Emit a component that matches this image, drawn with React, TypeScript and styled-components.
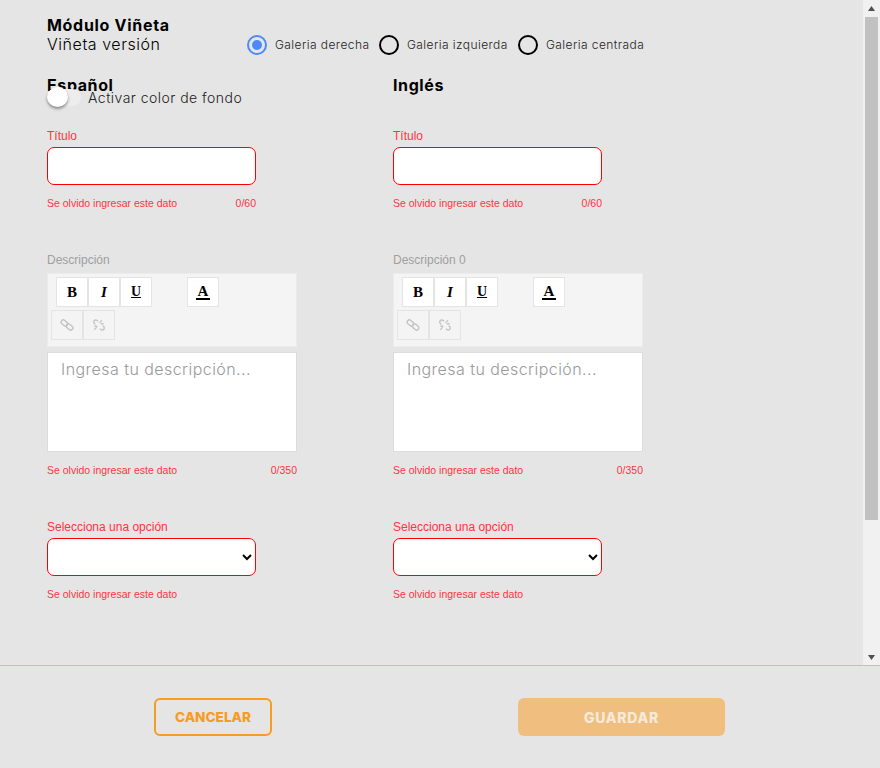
import React from "react";
import styled, { createGlobalStyle } from "styled-components";

const GlobalStyle = createGlobalStyle`
  html, body {
    margin: 0;
    padding: 0;
    height: 100%;
    overflow: hidden;
    background: #e5e5e5;
  }
`;

const Page = styled.div`
  height: 768px;
  display: flex;
  flex-direction: column;
  background: #e5e5e5;
  font-family: "Inter", "Liberation Sans", sans-serif;
  color: #000;
`;

const Main = styled.div`
  height: 665px;
  flex: 0 0 auto;
  display: flex;
  overflow: hidden;
`;

const Content = styled.div`
  flex: 1 1 auto;
  box-sizing: border-box;
  padding: 16px 0 0 47px;
`;

const ScrollBar = styled.div`
  width: 17px;
  flex: 0 0 auto;
  display: flex;
  flex-direction: column;
  align-items: center;
  background: #f1f1f1;
`;

const ScrollArrow = styled.svg`
  width: 17px;
  height: 17px;
  flex: 0 0 auto;
  fill: #505050;
`;

const ScrollThumb = styled.div`
  width: 13px;
  height: 503px;
  flex: 0 0 auto;
  background: #c1c1c1;
`;

const ScrollRest = styled.div`
  flex: 1 1 auto;
`;

const Divider = styled.div`
  height: 1px;
  flex: 0 0 auto;
  background: #f3b95f;
`;

const Header = styled.div`
  display: flex;
  align-items: flex-start;
  height: 55px;
`;

const TitleBlock = styled.div`
  width: 200px;
`;

const ModuleTitle = styled.div`
  font-size: 16px;
  line-height: 19px;
  font-weight: 700;
  letter-spacing: 0.7px;
`;

const ModuleSubtitle = styled.div`
  font-size: 16px;
  line-height: 18px;
  font-weight: 300;
  letter-spacing: 0.55px;
`;

const RadioGroup = styled.div`
  display: flex;
  align-items: center;
  margin-top: 19px;
`;

const RadioItem = styled.div<{ $width: number }>`
  display: flex;
  align-items: center;
  gap: 8px;
  width: ${(p) => p.$width}px;
  font-size: 12px;
  line-height: 20px;
  font-weight: 300;
  letter-spacing: 0.42px;
  color: #222;
`;

const RadioCircle = styled.span<{ $checked?: boolean }>`
  width: 20px;
  height: 20px;
  box-sizing: border-box;
  flex: 0 0 auto;
  border-radius: 50%;
  border: 2px solid ${(p) => (p.$checked ? "#4c8bf5" : "#000")};
  display: flex;
  align-items: center;
  justify-content: center;

  &::after {
    content: "";
    display: ${(p) => (p.$checked ? "block" : "none")};
    width: 10px;
    height: 10px;
    border-radius: 50%;
    background: #4c8bf5;
  }
`;

const Columns = styled.div`
  display: grid;
  grid-template-columns: 346px 346px;
  margin-top: 4px;
`;

const Column = styled.div`
  display: flex;
  flex-direction: column;
`;

const LangTitle = styled.div`
  font-size: 16px;
  line-height: 20px;
  font-weight: 700;
  height: 20px;
  letter-spacing: 0.6px;
`;

const ToggleRow = styled.div`
  display: flex;
  align-items: center;
  gap: 7px;
  height: 22px;
  margin-top: -9px;
  font-size: 14px;
  font-weight: 300;
  letter-spacing: 0.47px;
  color: #222;
`;

const ToggleTrack = styled.span`
  position: relative;
  width: 34px;
  height: 22px;
  flex: 0 0 auto;

  &::before {
    content: "";
    position: absolute;
    left: 0;
    right: 0;
    top: 3px;
    bottom: 2px;
    border-radius: 9px;
    background: #ededed;
  }

  &::after {
    content: "";
    position: absolute;
    left: 0;
    top: 1px;
    width: 21px;
    height: 20px;
    border-radius: 50%;
    background: #fff;
    box-shadow: 0 2px 3px rgba(0, 0, 0, 0.4);
  }
`;

const Spacer = styled.div<{ $height: number }>`
  height: ${(p) => p.$height}px;
  flex: 0 0 auto;
`;

const FieldLabel = styled.div<{ $muted?: boolean }>`
  font-family: "Liberation Sans", Arial, sans-serif;
  font-size: 12px;
  line-height: 15px;
  height: 13px;
  margin-bottom: ${(p) => (p.$muted ? 7 : 5)}px;
  color: ${(p) => (p.$muted ? "#a0a0a0" : "#ff3344")};
`;

const TextBox = styled.input`
  display: block;
  width: 209px;
  height: 38px;
  box-sizing: border-box;
  padding: 0 10px;
  border: 1px solid #f00;
  border-radius: 7px;
  background: #fff;
  outline: none;
`;

const SelectBox = styled.select`
  display: block;
  width: 209px;
  height: 38px;
  box-sizing: border-box;
  border: 1px solid #f00;
  border-radius: 7px;
  background: #fff;
  outline: none;
`;

const HelpRow = styled.div<{ $width: number }>`
  display: flex;
  justify-content: space-between;
  width: ${(p) => p.$width}px;
  margin-top: 12px;
  font-family: "Liberation Sans", Arial, sans-serif;
  font-size: 10.5px;
  line-height: 12px;
  color: #ff3344;
`;

const Toolbar = styled.div`
  width: 250px;
  height: 74px;
  box-sizing: border-box;
  background: #f4f4f4;
  border: 1px solid #ececec;
  padding: 3px 0 0 3px;
  display: flex;
  flex-direction: column;
  gap: 3px;
`;

const ToolRow = styled.div<{ $indent?: number }>`
  display: flex;
  padding-left: ${(p) => p.$indent ?? 0}px;
`;

const ToolButton = styled.div<{ $disabled?: boolean; $gapLeft?: number }>`
  width: 32px;
  height: 30px;
  box-sizing: border-box;
  margin-left: ${(p) => p.$gapLeft ?? 0}px;
  border: 1px solid #e4e4e4;
  background: ${(p) => (p.$disabled ? "#f4f4f4" : "#fff")};
  display: flex;
  align-items: center;
  justify-content: center;
  font-family: "Liberation Serif", "Times New Roman", serif;
  font-size: 15px;
  color: #000;
`;

const BoldGlyph = styled.b``;
const ItalicGlyph = styled.i`
  font-weight: 700;
`;
const UnderlineGlyph = styled.u`
  font-weight: 700;
  font-size: 14px;
`;

const ColorGlyph = styled.span`
  font-weight: 700;
  line-height: 14px;
  padding: 0 2px;
  border-bottom: 2px solid #000;
`;

const ToolIcon = styled.svg`
  width: 14px;
  height: 14px;
  fill: none;
  stroke: #c4c4c4;
  stroke-width: 1.6;
  stroke-linecap: round;
`;

const Editor = styled.div`
  width: 250px;
  height: 100px;
  box-sizing: border-box;
  margin-top: 5px;
  padding: 6px 13px;
  background: #fff;
  border: 1px solid #dcdcdc;
  font-size: 16px;
  line-height: 20px;
  font-weight: 300;
  letter-spacing: 0.45px;
  color: #9a9a9a;
`;

const Footer = styled.div`
  flex: 1 1 auto;
  display: grid;
  align-items: start;
  padding: 32px 0 0 154px;
  grid-template-columns: 364px 207px;
`;

const CancelButton = styled.button`
  width: 118px;
  height: 38px;
  box-sizing: border-box;
  border: 2px solid #f79c23;
  border-radius: 6px;
  background: transparent;
  color: #f79c23;
  font-family: "Inter", "Liberation Sans", sans-serif;
  font-size: 13.6px;
  font-weight: 800;
  padding: 0;
`;

const SaveButton = styled.button`
  width: 207px;
  height: 38px;
  border: none;
  border-radius: 6px;
  background: #f0bf80;
  color: #f6ead9;
  font-family: "Inter", "Liberation Sans", sans-serif;
  font-size: 14px;
  font-weight: 800;
  letter-spacing: 0.7px;
  padding: 0;
`;

const LinkIcon = () => (
  <ToolIcon viewBox="0 0 16 16">
    <rect x="1" y="3.2" width="8" height="5" rx="2.5" transform="rotate(40 5 5.7)" />
    <rect x="7" y="7.8" width="8" height="5" rx="2.5" transform="rotate(40 11 10.3)" />
  </ToolIcon>
);

const UnlinkIcon = () => (
  <ToolIcon viewBox="0 0 16 16">
    <path d="M6.5 3.2 5.2 2.4a2.4 2.4 0 0 0-2.9 3.5l1 1" />
    <path d="M9.5 12.8l1.3.8a2.4 2.4 0 0 0 2.9-3.5l-1-1" />
    <path d="M9 5l2-2M10.5 6.5h2.2M5 11l-2 2M5.5 9.5H3.3" />
  </ToolIcon>
);

const LanguageColumn = ({ name, descLabel }: { name: string; descLabel: string }) => (
  <Column>
    <LangTitle>{name}</LangTitle>
    {name === "Español" ? (
      <ToggleRow>
        <ToggleTrack />
        Activar color de fondo
      </ToggleRow>
    ) : (
      <Spacer $height={13} />
    )}
    <Spacer $height={21} />
    <FieldLabel>Título</FieldLabel>
    <TextBox />
    <HelpRow $width={209}>
      <span>Se olvido ingresar este dato</span>
      <span>0/60</span>
    </HelpRow>
    <Spacer $height={44} />
    <FieldLabel $muted>{descLabel}</FieldLabel>
    <Toolbar>
      <ToolRow $indent={5}>
        <ToolButton><BoldGlyph>B</BoldGlyph></ToolButton>
        <ToolButton><ItalicGlyph>I</ItalicGlyph></ToolButton>
        <ToolButton><UnderlineGlyph>U</UnderlineGlyph></ToolButton>
        <ToolButton $gapLeft={35}><ColorGlyph>A</ColorGlyph></ToolButton>
      </ToolRow>
      <ToolRow>
        <ToolButton $disabled><LinkIcon /></ToolButton>
        <ToolButton $disabled><UnlinkIcon /></ToolButton>
      </ToolRow>
    </Toolbar>
    <Editor>Ingresa tu descripción...</Editor>
    <HelpRow $width={250}>
      <span>Se olvido ingresar este dato</span>
      <span>0/350</span>
    </HelpRow>
    <Spacer $height={44} />
    <FieldLabel>Selecciona una opción</FieldLabel>
    <SelectBox>
      <option />
    </SelectBox>
    <HelpRow $width={209}>
      <span>Se olvido ingresar este dato</span>
    </HelpRow>
  </Column>
);

export default function App() {
  return (
    <Page>
      <GlobalStyle />
      <Main>
        <Content>
          <Header>
            <TitleBlock>
              <ModuleTitle>Módulo Viñeta</ModuleTitle>
              <ModuleSubtitle>Viñeta versión</ModuleSubtitle>
            </TitleBlock>
            <RadioGroup>
              <RadioItem $width={132}><RadioCircle $checked />Galeria derecha</RadioItem>
              <RadioItem $width={139}><RadioCircle />Galeria izquierda</RadioItem>
              <RadioItem $width={130}><RadioCircle />Galeria centrada</RadioItem>
            </RadioGroup>
          </Header>
          <Columns>
            <LanguageColumn name="Español" descLabel="Descripción" />
            <LanguageColumn name="Inglés" descLabel="Descripción 0" />
          </Columns>
        </Content>
        <ScrollBar>
          <ScrollArrow viewBox="0 0 17 17"><path d="M8.5 6 12 11H5z" /></ScrollArrow>
          <ScrollThumb />
          <ScrollRest />
          <ScrollArrow viewBox="0 0 17 17"><path d="M8.5 12 12 7H5z" /></ScrollArrow>
        </ScrollBar>
      </Main>
      <Divider />
      <Footer>
        <div><CancelButton>CANCELAR</CancelButton></div>
        <SaveButton>GUARDAR</SaveButton>
      </Footer>
    </Page>
  );
}
